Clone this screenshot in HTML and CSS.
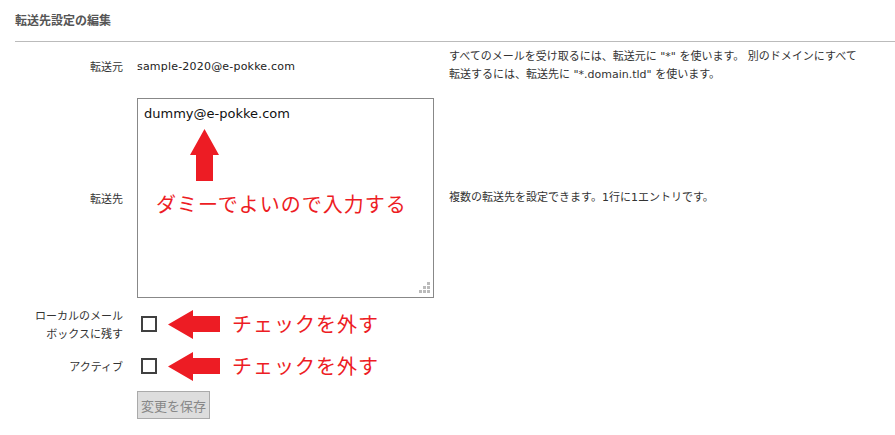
FILE: index.html
```html
<!doctype html>
<html>
<head>
	<title>転送先設定の編集</title>
	<link rel="stylesheet" href="styles.css">
</head>
<body>
<div class="header">
	<h1>転送先設定の編集</h1>
</div>
<form class="form">
	<div class="row row-from">
		<div class="label">転送元</div>
		<div class="field">sample-2020@e-pokke.com</div>
		<div class="help">すべてのメールを受け取るには、転送元に "*" を使います。 別のドメインにすべて<br>転送するには、転送先に "*.domain.tld" を使います。</div>
	</div>
	<div class="row row-to">
		<div class="label">転送先</div>
		<div class="field">
			<div class="textarea-wrap">
				<textarea>dummy@e-pokke.com</textarea>
				<svg class="grip" width="12" height="12" viewBox="0 0 12 12">
					<rect x="8" y="0" width="3" height="3" fill="#bbb"/>
					<rect x="4" y="4" width="3" height="3" fill="#bbb"/>
					<rect x="8" y="4" width="3" height="3" fill="#bbb"/>
					<rect x="0" y="8" width="3" height="3" fill="#bbb"/>
					<rect x="4" y="8" width="3" height="3" fill="#bbb"/>
					<rect x="8" y="8" width="3" height="3" fill="#bbb"/>
				</svg>
				<svg class="arrow-up" width="29" height="52" viewBox="0 0 29 52">
					<polygon points="14.5,0 29,26 23,26 23,52 6,52 6,26 0,26" fill="#ed1c24"/>
				</svg>
				<div class="note note-dummy">ダミーでよいので入力する</div>
			</div>
		</div>
		<div class="help">複数の転送先を設定できます。1行に1エントリです。</div>
	</div>
	<div class="row row-keep">
		<div class="label">ローカルのメール<br>ボックスに残す</div>
		<div class="field check">
			<input type="checkbox">
			<svg class="arrow-left" width="52" height="29" viewBox="0 0 52 29">
				<polygon points="0,14.5 25,0 25,6 52,6 52,22 25,22 25,29" fill="#ed1c24"/>
			</svg>
			<span class="note">チェックを外す</span>
		</div>
	</div>
	<div class="row row-active">
		<div class="label">アクティブ</div>
		<div class="field check">
			<input type="checkbox">
			<svg class="arrow-left" width="52" height="29" viewBox="0 0 52 29">
				<polygon points="0,14.5 25,0 25,6 52,6 52,22 25,22 25,29" fill="#ed1c24"/>
			</svg>
			<span class="note">チェックを外す</span>
		</div>
	</div>
	<div class="row row-submit">
		<div class="label"></div>
		<div class="field">
			<button type="button" disabled>変更を保存</button>
		</div>
	</div>
</form>
</body>
</html>
```

FILE: styles.css
```css
* {
    margin: 0;
    padding: 0;
    box-sizing: border-box;
}

body {
    font: 11px "DejaVu Sans", "Noto Sans CJK JP", sans-serif;
    color: #333;
    background: #fff;
}

.header {
    margin-left: 15px;
    padding: 12px 0 13px;
    border-bottom: 1px solid #bbb;
}

.header h1 {
    font: bold 12px/16px "Noto Sans CJK JP", sans-serif;
    color: #555;
}

.form {
    padding-left: 15px;
}

.row {
    display: grid;
    grid-template-columns: 108px 296px 1fr;
    column-gap: 14px;
    align-items: center;
}

.label {
    text-align: right;
    line-height: 18px;
    font-family: "Noto Sans CJK JP", sans-serif;
}

.help {
    padding-left: 2px;
    line-height: 18px;
}

.row-from {
    margin-top: 6px;
}

.row-from .field {
    color: #222;
    letter-spacing: 0.2px;
}

.row-to {
    margin-top: 14px;
}

.row-keep {
    margin-top: 8px;
    height: 36px;
}

.row-active {
    margin-top: 9px;
    height: 30px;
}

.row-submit {
    margin-top: 10px;
}

.textarea-wrap {
    position: relative;
    width: 297px;
    height: 200px;
}

textarea {
    display: block;
    width: 297px;
    height: 200px;
    border: 1px solid #888;
    padding: 6px 6px;
    resize: none;
    font: 13px/18px "DejaVu Sans", sans-serif;
    color: #111;
    outline: none;
}

.grip {
    position: absolute;
    right: 3px;
    bottom: 4px;
}

.arrow-up {
    position: absolute;
    left: 53px;
    top: 31px;
}

.note {
    font: 20px/24px "Noto Sans CJK JP", sans-serif;
    letter-spacing: 1px;
    color: #ed1c24;
}

.note-dummy {
    position: absolute;
    left: 19px;
    top: 94px;
    white-space: nowrap;
}

.check {
    display: flex;
    align-items: center;
}

.check input {
    appearance: none;
    width: 16px;
    height: 16px;
    margin-left: 4px;
    border: 2px solid #404040;
    background: #fff;
}

.arrow-left {
    margin-left: 11px;
}

.check .note {
    margin-left: 12px;
}

button {
    height: 28px;
    padding: 0 3px;
    font: 13px "Noto Sans CJK JP", sans-serif;
    color: #888;
    background: #ddd;
    border: 1px solid #aaa;
}
```
